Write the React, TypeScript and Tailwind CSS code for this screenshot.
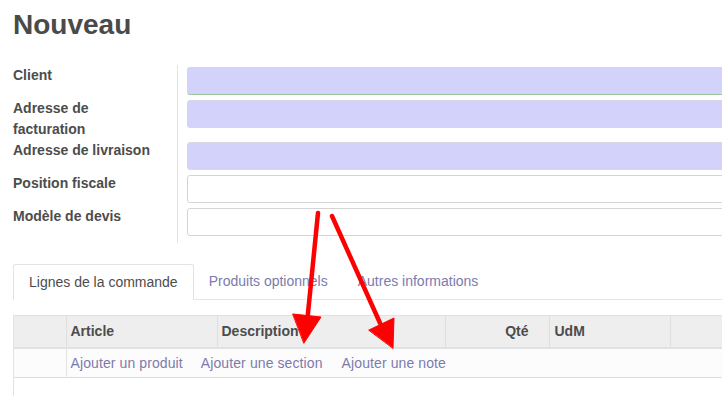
const fields = [
  { label: "Client", filled: true, green: true },
  { label: "Adresse de facturation", filled: true },
  { label: "Adresse de livraison", filled: true },
  { label: "Position fiscale", filled: false },
  { label: "Modèle de devis", filled: false },
];

const tabs = ["Lignes de la commande", "Produits optionnels", "Autres informations"];

function Arrows() {
  return (
    <svg className="absolute top-0 left-0 pointer-events-none" width="722" height="396" viewBox="0 0 722 396">
      <g fill="#ff0000" stroke="#ff0000" strokeLinecap="round">
        <line x1="318" y1="213" x2="307.5" y2="318" strokeWidth="4.5" />
        <polygon points="293,314 321,317 304,343" strokeWidth="1" strokeLinejoin="round" />
        <line x1="332" y1="216" x2="380" y2="323" strokeWidth="4.5" />
        <polygon points="369,330 394,318 393,348" strokeWidth="1" strokeLinejoin="round" />
      </g>
    </svg>
  );
}

export default function App() {
  return (
    <div className="relative w-[722px] h-[396px] overflow-hidden bg-white text-[#4c4c4c] font-['Liberation_Sans',Arial,sans-serif]">
      <div className="pl-[13px] pt-[8px]">
        <h1 className="text-[28px] leading-[34px] font-bold text-[#4a4a4a]">Nouveau</h1>

        <div className="mt-[23px] flex">
          <div className="w-[164px] shrink-0 pr-[20px]">
            {fields.map((f) => (
              <div key={f.label} className="min-h-[33px] text-[14px] leading-[21px] font-bold w-[140px]">
                {f.label}
              </div>
            ))}
          </div>
          <div className="border-l border-[#e3e3e3] pl-[9px] flex-1 pb-[4px]">
            {fields.map((f) => (
              <div
                key={f.label}
                className={`${f.label === "Adresse de facturation" ? "h-[42px]" : "h-[33px]"} pt-[2px]`}
              >
                <div
                  className={`h-[28px] w-[560px] rounded-[3px] border ${
                    f.filled ? "bg-[#d2d2fb] border-[#d6d6e6]" : "bg-white border-[#d4d4d4]"
                  } ${f.green ? "border-b-[#9cc49c]" : ""}`}
                />
              </div>
            ))}
          </div>
        </div>

        <div className="mt-[21px] flex border-b border-[#e5e5e5] text-[14px] leading-[21px] w-[720px]">
          {tabs.map((t, i) => (
            <div
              key={t}
              className={`h-[35px] px-[15px] flex items-center ${
                i === 0
                  ? "border border-b-0 border-[#e3e3e3] rounded-t-[3px] bg-white -mb-px h-[36px] text-[#4c4c4c]"
                  : "text-[#7c7bad]"
              }`}
            >
              {t}
            </div>
          ))}
        </div>

        <div className="mt-[15px] border-l border-[#e3e3e3] h-[100px]">
          <table className="table-fixed border-collapse w-[740px] text-[14px]">
            <colgroup>
              <col className="w-[52px]" />
              <col className="w-[151px]" />
              <col className="w-[228px]" />
              <col className="w-[104px]" />
              <col className="w-[121px]" />
              <col />
            </colgroup>
            <thead>
              <tr className="bg-[#eeeeee] h-[32px] border-t border-[#e1e1e1] border-b-2 border-b-[#dfe2e6] font-bold">
                <th className="border-r border-[#dedede]"></th>
                <th className="text-left pl-[4px] border-r border-[#dedede]">Article</th>
                <th className="text-left pl-[4px] border-r border-[#dedede]">Description</th>
                <th className="text-right pr-[20px] border-r border-[#dedede]">Qté</th>
                <th className="text-left pl-[5px] border-r border-[#dedede]">UdM</th>
                <th></th>
              </tr>
            </thead>
            <tbody>
              <tr className="bg-[#fcfcfc] h-[30px] border-b border-[#dcdcdc]">
                <td className="border-r border-[#e3e3e3]"></td>
                <td colSpan={5} className="pl-[4px] pt-[2px] text-[#7c7bad] tracking-[0.1px]">
                  <span className="mr-[18px]">Ajouter un produit</span>
                  <span className="mr-[19px]">Ajouter une section</span>
                  <span>Ajouter une note</span>
                </td>
              </tr>
            </tbody>
          </table>
        </div>
      </div>
      <Arrows />
    </div>
  );
}
